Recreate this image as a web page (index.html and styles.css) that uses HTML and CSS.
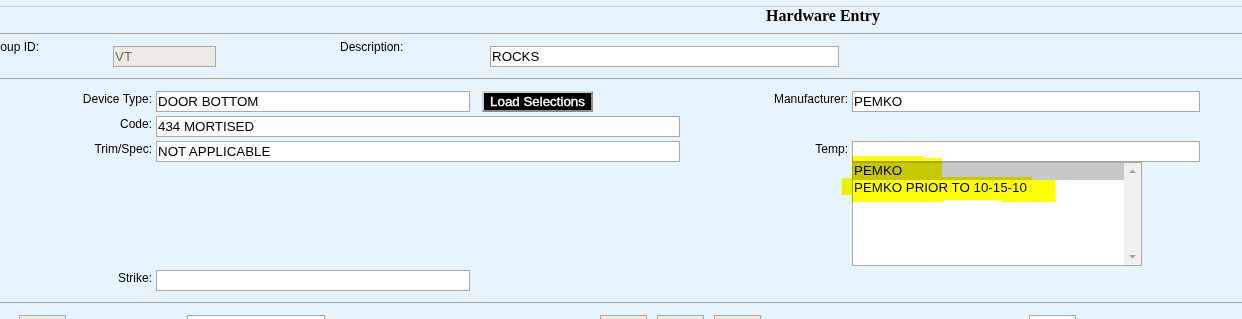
FILE: index.html
```html
<!DOCTYPE html>
<html>

	<head>
		<meta charset="UTF-8">
		<title>Hardware Entry</title>
		<link rel="stylesheet" href="styles.css">
	</head>

	<body>
		<div class="title-bar">
			<h1 class="title">Hardware Entry</h1>
		</div>

		<div class="id-row">
			<label class="lbl lbl-group">Group ID:</label>
			<input class="fld fld-group" type="text" value="VT" disabled>
			<label class="lbl lbl-desc">Description:</label>
			<input class="fld fld-desc" type="text" value="ROCKS">
		</div>

		<div class="entry">
			<div class="entry-left">
				<label class="lbl">Device Type:</label>
				<div class="device-cell">
					<input class="fld fld-short" type="text" value="DOOR BOTTOM">
					<button class="load-btn" type="button">Load Selections</button>
				</div>
				<label class="lbl">Code:</label>
				<input class="fld fld-long" type="text" value="434 MORTISED">
				<label class="lbl">Trim/Spec:</label>
				<input class="fld fld-long" type="text" value="NOT APPLICABLE">
				<label class="lbl strike">Strike:</label>
				<input class="fld fld-short strike" type="text" value="">
			</div>

			<div class="entry-right">
				<label class="lbl">Manufacturer:</label>
				<input class="fld fld-mfr" type="text" value="PEMKO">
				<span></span>
				<span class="blank"></span>
				<label class="lbl">Temp:</label>
				<div class="temp-cell">
					<input class="fld fld-mfr" type="text" value="">
					<div class="listbox">
						<div class="options">
							<div class="opt sel">PEMKO</div>
							<div class="opt">PEMKO PRIOR TO 10-15-10</div>
						</div>
						<div class="scroll">
							<svg width="17" height="17" viewBox="0 0 17 17"><polygon points="5,10 12,10 8.5,6.5" fill="#a3a3a3"/></svg>
							<svg width="17" height="17" viewBox="0 0 17 17"><polygon points="5,7 12,7 8.5,10.5" fill="#a3a3a3"/></svg>
						</div>
						<!-- highlighter strokes drawn over the list -->
						<span class="mark" style="left:-1px;top:-7px;width:71px;height:24px"></span>
						<span class="mark" style="left:70px;top:-5px;width:19px;height:22px"></span>
						<span class="mark" style="left:-1px;top:17px;width:203px;height:20px"></span>
						<span class="mark" style="left:-11px;top:15px;width:10px;height:17px"></span>
						<span class="mark" style="left:70px;top:14px;width:109px;height:3px"></span>
						<span class="mark" style="left:-1px;top:37px;width:91px;height:2px"></span>
						<span class="mark" style="left:149px;top:37px;width:53px;height:2px"></span>
					</div>
				</div>
			</div>
		</div>

		<div class="btn-row">
			<button class="mini-btn first" type="button"></button>
			<input class="fld mini-fld wide" type="text" value="">
			<button class="mini-btn mid" type="button"></button>
			<button class="mini-btn near" type="button"></button>
			<button class="mini-btn near" type="button"></button>
			<input class="fld mini-fld far" type="text" value="">
		</div>
	</body>

</html>
```

FILE: styles.css
```css
html,
body {
	overflow: hidden;
}

body {
	margin: 0;
	background: #e7f3fd;
	font-family: "Liberation Sans", Arial, sans-serif;
	font-size: 12px;
	color: #000;
}

.title-bar {
	margin-top: 6px;
	height: 26px;
	border-top: 1px solid #cfcfcf;
	border-bottom: 1px solid #a0a0a0;
}

.title {
	margin: 0 0 0 766px;
	font: bold 16px/18px "Liberation Serif", "Times New Roman", serif;
}

.lbl {
	line-height: 14px;
	white-space: nowrap;
}

.fld {
	box-sizing: border-box;
	height: 21px;
	margin: 0;
	padding: 0 1px;
	border: 1px solid #a9a9a9;
	border-radius: 0;
	background: #fff;
	color: #000;
	font: 13.33px "Liberation Sans", Arial, sans-serif;
	outline: none;
}

.fld:disabled {
	background: #ebebe4;
	color: #6d6d6d;
}

/* group / description row */
.id-row {
	display: flex;
	align-items: flex-start;
	height: 45px;
	box-sizing: border-box;
	padding-top: 6px;
	border-bottom: 1px solid #a0a0a0;
}

.id-row .fld {
	margin-top: 6px;
	flex: none;
}

.lbl-group {
	margin-left: -13px;
	width: 126px;
	flex: none;
}

.fld-group {
	width: 103px;
}

.lbl-desc {
	margin-left: 124px;
	width: 150px;
	flex: none;
}

.fld-desc {
	width: 349px;
}

/* main entry block */
.entry {
	display: flex;
	align-items: flex-start;
	padding: 12px 0 11px;
	border-bottom: 1px solid #a0a0a0;
}

.entry-left {
	display: grid;
	grid-template-columns: 152px auto;
	column-gap: 4px;
	row-gap: 4px;
	align-items: start;
	width: 680px;
	flex: none;
}

.entry-right {
	display: grid;
	grid-template-columns: 148px 348px;
	column-gap: 4px;
	row-gap: 4px;
	align-items: start;
	margin-left: 20px;
}

.entry .lbl {
	text-align: right;
	padding-top: 1px;
}

.device-cell {
	display: flex;
}

.fld-short {
	width: 314px;
}

.fld-long {
	width: 524px;
}

.fld-mfr {
	width: 348px;
}

.strike {
	margin-top: 104px;
}

.blank {
	height: 21px;
}

.load-btn {
	margin-left: 12px;
	width: 111px;
	height: 21px;
	box-sizing: border-box;
	padding: 0;
	background: #000;
	color: #fff;
	font: 13.33px "Liberation Sans", Arial, sans-serif;
	-webkit-text-stroke: 0.35px #fff;
	border-style: solid;
	border-width: 2px;
	border-color: #d0d0d0 #8c8c8c #8c8c8c #d0d0d0;
}

.temp-cell {
	display: flex;
	flex-direction: column;
	align-items: flex-start;
}

.listbox {
	position: relative;
	display: flex;
	width: 290px;
	height: 104px;
	box-sizing: border-box;
	border: 1px solid #a9a9a9;
	background: #fff;
}

.options {
	flex: 1;
	font-size: 13.33px;
}

.opt {
	line-height: 15px;
	padding: 0 1px 2px;
	white-space: nowrap;
}

.opt.sel {
	background: #c8c8c8;
}

.scroll {
	width: 17px;
	background: #f0f0f0;
	display: flex;
	flex-direction: column;
	justify-content: space-between;
}

.scroll svg {
	display: block;
}

.mark {
	position: absolute;
	background: #ff0;
	mix-blend-mode: multiply;
}

/* bottom row, cut off by the window */
.btn-row {
	display: flex;
	padding-top: 12px;
}

.mini-btn {
	width: 47px;
	height: 21px;
	box-sizing: border-box;
	margin: 0;
	padding: 0;
	flex: none;
	background: #ebebe4;
	border: 1px solid #a9a9a9;
}

.mini-btn.first {
	margin-left: 19px;
}

.mini-btn.mid {
	margin-left: 275px;
}

.mini-btn.near {
	margin-left: 10px;
}

.mini-fld {
	flex: none;
}

.mini-fld.wide {
	margin-left: 121px;
	width: 138px;
}

.mini-fld.far {
	margin-left: 268px;
	width: 47px;
}
```
